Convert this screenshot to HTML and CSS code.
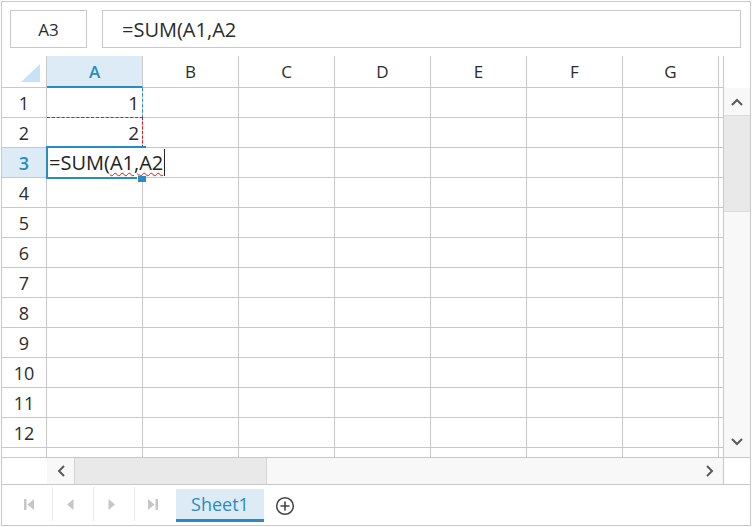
FILE: index.html
```html
<!DOCTYPE html>
<html>
<head>
<meta charset="utf-8">
<link rel="stylesheet" href="styles.css">
</head>
<body>
<div class="app">
  <div class="toolbar">
    <div class="namebox">A3</div>
    <div class="formula">=SUM(A1,A2</div>
  </div>
  <div class="main">
    <div class="viewport">
      <div class="hrow">
        <div class="corner"><svg width="19" height="18" viewBox="0 0 19 18"><polygon points="19,0 19,18 0,18" fill="#c6e3f6"/></svg></div>
        <div class="ch sel">A</div><div class="ch">B</div><div class="ch">C</div><div class="ch">D</div><div class="ch">E</div><div class="ch">F</div><div class="ch">G</div><div class="ch"></div>
      </div>
      <div class="row"><div class="rh">1</div><div class="c num">1</div><div class="c"></div><div class="c"></div><div class="c"></div><div class="c"></div><div class="c"></div><div class="c"></div><div class="c"></div></div>
      <div class="row"><div class="rh">2</div><div class="c num">2</div><div class="c"></div><div class="c"></div><div class="c"></div><div class="c"></div><div class="c"></div><div class="c"></div><div class="c"></div></div>
      <div class="row"><div class="rh sel">3</div><div class="c"></div><div class="c"></div><div class="c"></div><div class="c"></div><div class="c"></div><div class="c"></div><div class="c"></div><div class="c"></div></div>
      <div class="row"><div class="rh">4</div><div class="c"></div><div class="c"></div><div class="c"></div><div class="c"></div><div class="c"></div><div class="c"></div><div class="c"></div><div class="c"></div></div>
      <div class="row"><div class="rh">5</div><div class="c"></div><div class="c"></div><div class="c"></div><div class="c"></div><div class="c"></div><div class="c"></div><div class="c"></div><div class="c"></div></div>
      <div class="row"><div class="rh">6</div><div class="c"></div><div class="c"></div><div class="c"></div><div class="c"></div><div class="c"></div><div class="c"></div><div class="c"></div><div class="c"></div></div>
      <div class="row"><div class="rh">7</div><div class="c"></div><div class="c"></div><div class="c"></div><div class="c"></div><div class="c"></div><div class="c"></div><div class="c"></div><div class="c"></div></div>
      <div class="row"><div class="rh">8</div><div class="c"></div><div class="c"></div><div class="c"></div><div class="c"></div><div class="c"></div><div class="c"></div><div class="c"></div><div class="c"></div></div>
      <div class="row"><div class="rh">9</div><div class="c"></div><div class="c"></div><div class="c"></div><div class="c"></div><div class="c"></div><div class="c"></div><div class="c"></div><div class="c"></div></div>
      <div class="row"><div class="rh">10</div><div class="c"></div><div class="c"></div><div class="c"></div><div class="c"></div><div class="c"></div><div class="c"></div><div class="c"></div><div class="c"></div></div>
      <div class="row"><div class="rh">11</div><div class="c"></div><div class="c"></div><div class="c"></div><div class="c"></div><div class="c"></div><div class="c"></div><div class="c"></div><div class="c"></div></div>
      <div class="row"><div class="rh">12</div><div class="c"></div><div class="c"></div><div class="c"></div><div class="c"></div><div class="c"></div><div class="c"></div><div class="c"></div><div class="c"></div></div>
      <div class="row"><div class="rh">13</div><div class="c"></div><div class="c"></div><div class="c"></div><div class="c"></div><div class="c"></div><div class="c"></div><div class="c"></div><div class="c"></div></div>

      <div class="ref-a1"></div>
      <div class="ref-a2"></div>
      <div class="selection"></div>
      <div class="editor"><span>=SUM(</span><span class="spell">A1,</span><span class="spell">A2</span><span class="caret"></span></div>
      <div class="handle"></div>
    </div>
    <div class="vscroll">
      <div class="vspacer"></div>
      <div class="sbtn vbtn"><svg width="12" height="8" viewBox="0 0 12 8"><path d="M1 7 L6 2 L11 7" fill="none" stroke="#5a5a5a" stroke-width="2"/></svg></div>
      <div class="vthumb"></div>
      <div class="vtrack"></div>
      <div class="sbtn vbtn down"><svg width="12" height="8" viewBox="0 0 12 8"><path d="M1 1 L6 6 L11 1" fill="none" stroke="#5a5a5a" stroke-width="2"/></svg></div>
    </div>
    <div class="hscroll">
      <div class="hspacer"></div>
      <div class="sbtn hbtn"><svg width="8" height="12" viewBox="0 0 8 12"><path d="M7 1 L2 6 L7 11" fill="none" stroke="#5a5a5a" stroke-width="2"/></svg></div>
      <div class="hthumb"></div>
      <div class="htrack"></div>
      <div class="sbtn hbtn"><svg width="8" height="12" viewBox="0 0 8 12"><path d="M1 1 L6 6 L1 11" fill="none" stroke="#5a5a5a" stroke-width="2"/></svg></div>
    </div>
    <div class="scorner"></div>
  </div>
  <div class="tabbar">
    <div class="nav"><svg width="11" height="11" viewBox="0 0 11 11"><rect x="0" y="0" width="2.5" height="11" fill="#c6c6c6"/><polygon points="10,0 10,11 3.5,5.5" fill="#c6c6c6"/></svg></div>
    <div class="nav"><svg width="7" height="11" viewBox="0 0 7 11"><polygon points="6.5,0 6.5,11 0,5.5" fill="#c6c6c6"/></svg></div>
    <div class="nav"><svg width="7" height="11" viewBox="0 0 7 11"><polygon points="0.5,0 0.5,11 7,5.5" fill="#c6c6c6"/></svg></div>
    <div class="nav last"><svg width="11" height="11" viewBox="0 0 11 11"><polygon points="1,0 1,11 7.5,5.5" fill="#c6c6c6"/><rect x="8.5" y="0" width="2.5" height="11" fill="#c6c6c6"/></svg></div>
    <div class="tab">Sheet1</div>
    <div class="add"><svg width="20" height="20" viewBox="0 0 20 20"><circle cx="10" cy="10" r="8.3" fill="none" stroke="#444" stroke-width="1.5"/><path d="M10 5.5v9M5.5 10h9" stroke="#444" stroke-width="1.6"/></svg></div>
  </div>
</div>
</body>
</html>
```
FILE: styles.css
```css
* { box-sizing: border-box; }
body {
  margin: 0;
  font-family: "Segoe UI", "Open Sans", "Noto Sans", sans-serif;
  color: #2b2b2b;
  background: #fff;
}
.app {
  margin: 1px 0 0 1px;
  width: 750px;
  height: 525px;
  border: 1px solid #c8c8c8;
  display: flex;
  flex-direction: column;
}
.toolbar {
  height: 54px;
  flex: none;
  display: flex;
  gap: 15px;
  padding: 8px 9px 0 8px;
}
.namebox {
  width: 77px;
  height: 38px;
  border: 1px solid #c8c8c8;
  display: flex;
  align-items: center;
  justify-content: center;
  font-size: 17px;
}
.formula {
  flex: 1;
  height: 38px;
  border: 1px solid #c8c8c8;
  display: flex;
  align-items: center;
  padding-left: 19px;
  font-size: 20px;
}
.main {
  flex: none;
  height: 429px;
  display: grid;
  grid-template-columns: 721px 27px;
  grid-template-rows: 401px 28px;
}
.viewport {
  position: relative;
  overflow: hidden;
}
.hrow, .row {
  display: flex;
}
.corner {
  flex: none;
  width: 45px;
  height: 32px;
  border-right: 1px solid #c8c8c8;
  border-bottom: 1px solid #c8c8c8;
  display: flex;
  justify-content: flex-end;
  align-items: flex-end;
  padding: 0 6px 5px 0;
}
.corner svg { display: block; }
.ch {
  flex: none;
  width: 96px;
  height: 32px;
  border-right: 1px solid #c8c8c8;
  border-bottom: 1px solid #c8c8c8;
  display: flex;
  align-items: center;
  justify-content: center;
  font-size: 17px;
}
.ch.sel {
  background: #dcebf5;
  color: #2a8bc3;
  font-weight: 600;
  border-bottom: 2px solid #2a8bc3;
}
.rh {
  flex: none;
  width: 45px;
  height: 30px;
  border-right: 1px solid #c8c8c8;
  border-bottom: 1px solid #c8c8c8;
  display: flex;
  align-items: center;
  justify-content: center;
  font-size: 18px;
}
.rh.sel {
  background: #dcebf5;
  color: #2a8bc3;
  font-weight: 600;
}
.c {
  flex: none;
  width: 96px;
  height: 30px;
  border-right: 1px solid #c8c8c8;
  border-bottom: 1px solid #c8c8c8;
  font-size: 19px;
  display: flex;
  align-items: center;
  justify-content: flex-end;
  padding-right: 3px;
}
.ref-a1 {
  position: absolute;
  left: 140px;
  top: 32px;
  width: 1px;
  height: 30px;
  border-right: 1px dashed #2196d8;
}
.ref-a2 {
  position: absolute;
  left: 45px;
  top: 61px;
  width: 96px;
  height: 31px;
  border-top: 1px dashed #e81010;
  border-right: 1px dashed #e81010;
}
.selection {
  position: absolute;
  left: 44px;
  top: 90px;
  width: 100px;
  height: 33px;
  border-top: 2px solid #2a8bc3;
  border-left: 2px solid #2a8bc3;
  border-bottom: 2px solid #2a8bc3;
}
.editor {
  position: absolute;
  left: 46px;
  top: 92px;
  height: 29px;
  background: #fff;
  display: flex;
  align-items: center;
  padding-left: 1px;
  font-size: 20px;
  color: #222;
}
.spell {
  text-decoration: underline wavy #e81010;
  text-decoration-thickness: 1px;
  text-underline-offset: 2px;
}
.caret {
  width: 1px;
  height: 27px;
  background: #222;
  margin-left: 1px;
}
.handle {
  position: absolute;
  left: 135px;
  top: 120px;
  width: 9px;
  height: 6px;
  background: #2a8bc3;
  border-left: 1px solid #fff;
}
.vscroll {
  grid-column: 2;
  grid-row: 1;
  border-left: 1px solid #c8c8c8;
  display: flex;
  flex-direction: column;
}
.vspacer { height: 32px; flex: none; }
.sbtn {
  flex: none;
  background: #f8f8f8;
  display: flex;
  align-items: center;
  justify-content: center;
}
.sbtn svg { display: block; }
.vbtn { height: 27px; }
.vbtn.down { height: 30px; }
.vthumb {
  height: 97px;
  flex: none;
  background: #e9e9e9;
  border-top: 1px solid #dcdcdc;
  border-bottom: 1px solid #dcdcdc;
}
.vtrack { flex: 1; background: #f8f8f8; }
.hscroll {
  grid-column: 1;
  grid-row: 2;
  display: flex;
  border-top: 1px solid #c8c8c8;
  border-bottom: 1px solid #c8c8c8;
}
.hspacer { width: 45px; flex: none; }
.hbtn { width: 27px; }
.hthumb {
  width: 193px;
  flex: none;
  background: #e9e9e9;
  border-left: 1px solid #d4d4d4;
  border-right: 1px solid #d4d4d4;
}
.htrack { flex: 1; background: #f8f8f8; }
.scorner {
  grid-column: 2;
  grid-row: 2;
  border-left: 1px solid #c8c8c8;
  border-top: 1px solid #c8c8c8;
  border-bottom: 1px solid #c8c8c8;
}
.tabbar {
  flex: 1;
  display: flex;
  align-items: flex-start;
  padding: 2px 0 0 10px;
}
.nav {
  width: 41px;
  height: 34px;
  border-right: 1px solid #e8e8e8;
  display: flex;
  align-items: center;
  justify-content: center;
  padding-right: 6px;
}
.nav.last { border-right: none; }
.nav svg { display: block; }
.tab {
  margin-top: 2px;
  width: 88px;
  height: 33px;
  background: #dcebf5;
  border-bottom: 3px solid #2a8bc3;
  color: #2a8bc3;
  font-size: 18px;
  display: flex;
  align-items: center;
  justify-content: center;
}
.add {
  margin: 9px 0 0 11px;
  display: flex;
}
.add svg { display: block; }
```
